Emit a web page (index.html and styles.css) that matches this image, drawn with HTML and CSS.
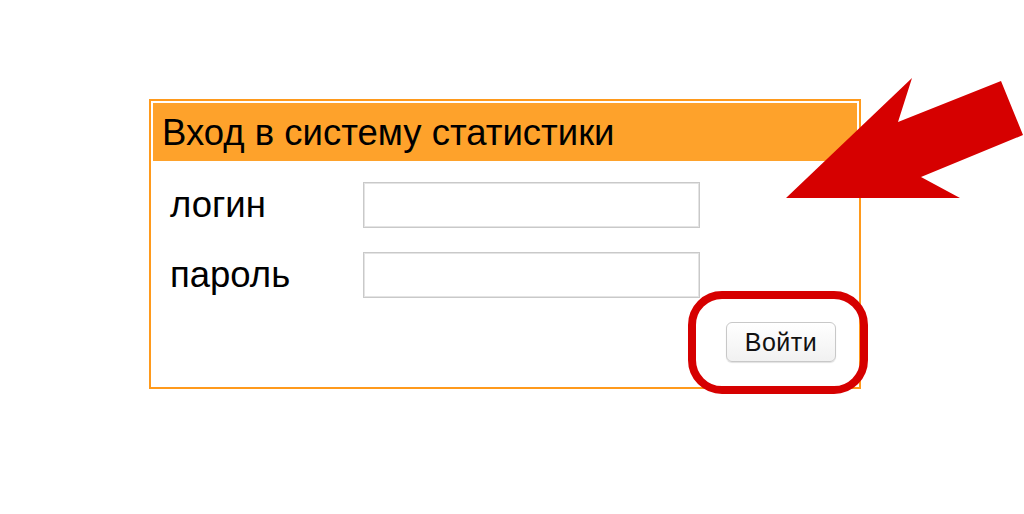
FILE: index.html
```html
<html lang="ru">
<head>
  <meta charset="UTF-8">
  <meta name="viewport" content="width=device-width, initial-scale=1.0">
  <title>Вход в систему статистики</title>
  <link rel="stylesheet" href="styles.css">
</head>
<body>
  <div class="page">
    <form class="panel">
      <div class="panel-title">Вход в систему статистики</div>
      <div class="panel-body">
        <div class="row">
          <label class="label" for="login">логин</label>
          <input class="field" id="login" type="text">
        </div>
        <div class="row">
          <label class="label" for="pass">пароль</label>
          <input class="field" id="pass" type="password">
        </div>
        <div class="row row-submit">
          <button class="btn" type="button">Войти</button>
        </div>
      </div>
    </form>

    <svg class="marks" width="1024" height="514" viewBox="0 0 1024 514">
      <polygon points="786,198 912,78 898,122 1001,81 1023,135 921,177 960,198" fill="#d60000"/>
      <rect x="692" y="295" width="172" height="95" rx="30" ry="30" fill="none" stroke="#d60000" stroke-width="8"/>
    </svg>
  </div>
</body>
</html>
```

FILE: styles.css
```css
* {
  padding: 0;
  margin: 0;
  box-sizing: border-box;
}
body {
  background: #fff;
  font-family: "Liberation Sans", Arial, sans-serif;
}
.page {
  position: relative;
  width: 1024px;
  height: 514px;
  padding: 99px 0 0 149px;
}
.panel {
  width: 712px;
  height: 290px;
  border: 2px solid #ff9a1c;
  padding: 2px;
}
.panel-title {
  height: 58px;
  background-color: #fea22b;
  padding-left: 9px;
  font-size: 36.5px;
  line-height: 60px;
  color: #000;
}
.panel-body {
  padding: 21px 0 0 17px;
}
.row {
  display: flex;
  align-items: center;
  height: 46px;
  margin-bottom: 24px;
}
.label {
  width: 193px;
  font-size: 36.5px;
  color: #000;
}
.field {
  width: 337px;
  height: 46px;
  border: 1px solid #c9c9c9;
  box-shadow: inset 0 0 0 1px #e4e4e4;
  background: #fff;
  outline: none;
}
.row-submit {
  justify-content: flex-end;
  padding-right: 21px;
  height: 40px;
}
.btn {
  width: 110px;
  height: 40px;
  border: 1px solid #c8c8c8;
  border-radius: 6px;
  background: linear-gradient(#ffffff, #f1f1f1);
  box-shadow: 0 1px 1px rgba(0, 0, 0, .12);
  font-family: "Liberation Sans", Arial, sans-serif;
  font-size: 25px;
  letter-spacing: 0.5px;
  color: #111;
}
.marks {
  position: absolute;
  left: 0;
  top: 0;
  pointer-events: none;
}
```
